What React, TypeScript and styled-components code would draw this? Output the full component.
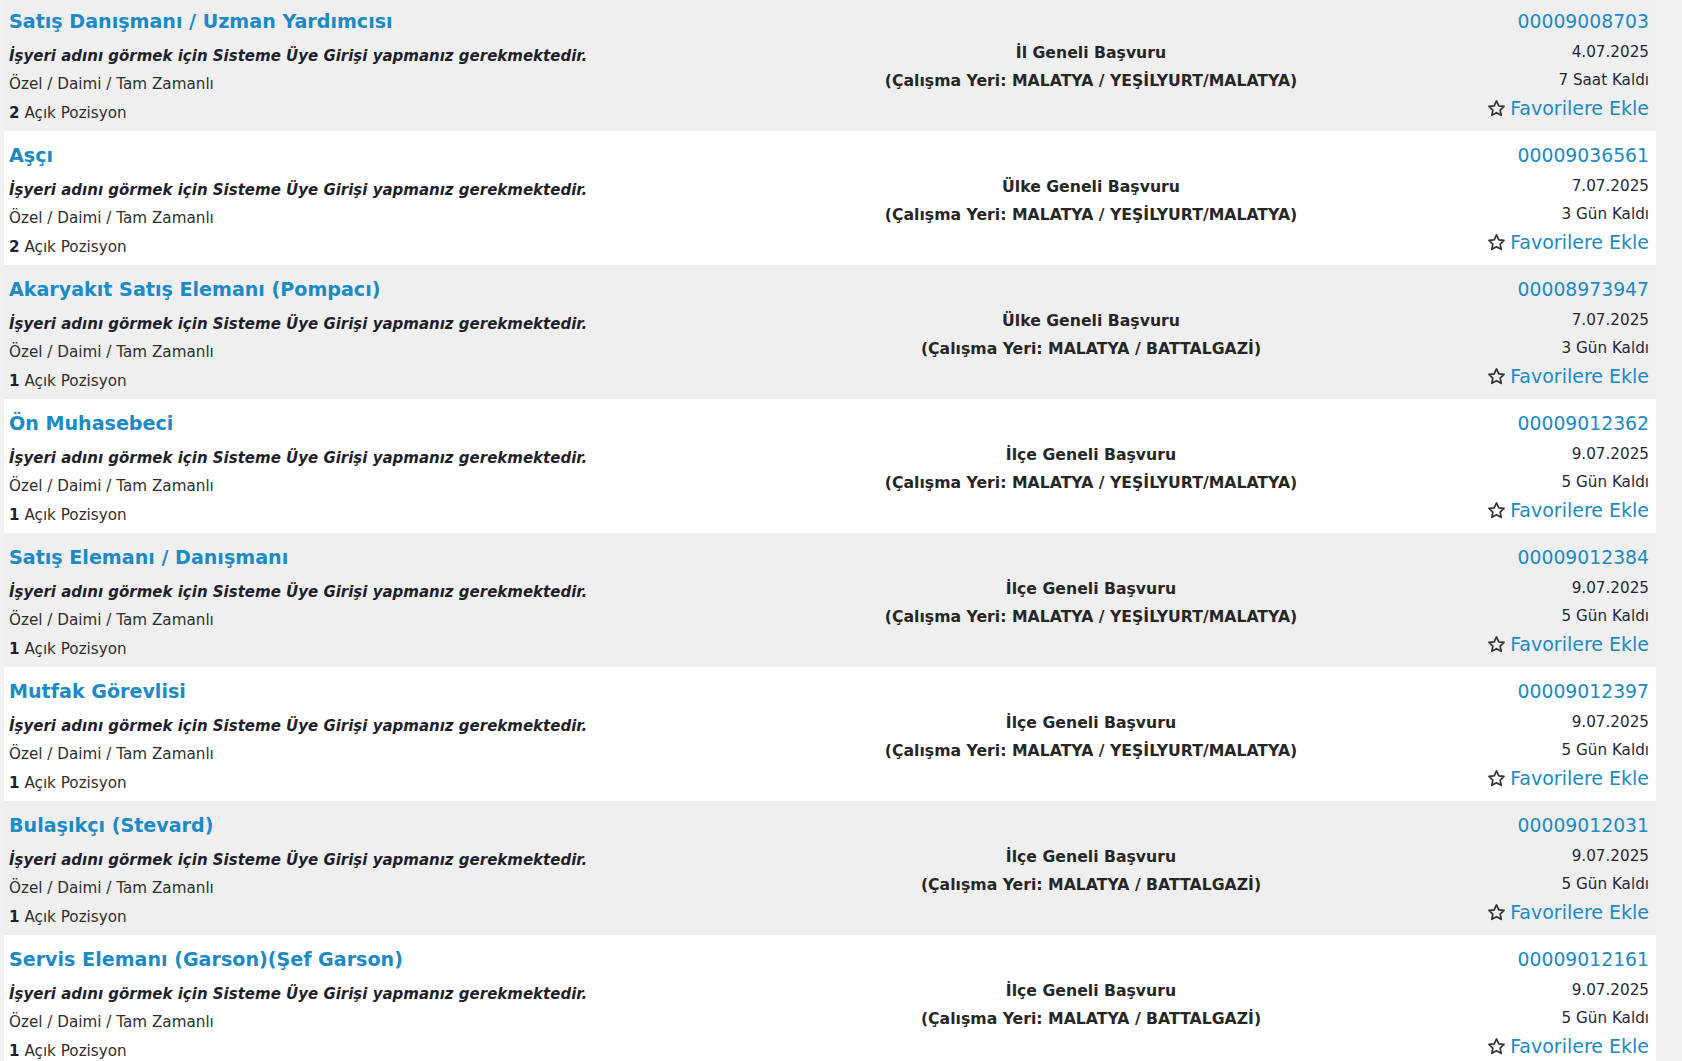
import React from "react";
import styled, { createGlobalStyle } from "styled-components";

const Global = createGlobalStyle`
  html, body { margin: 0; padding: 0; }
  body {
    background: #f1f1f1;
    font-family: "DejaVu Sans", Verdana, sans-serif;
    overflow: hidden;
  }
`;

const Page = styled.div`
  padding: 0 26px 0 4px;
`;

const List = styled.div`
  margin-top: -3px;
  display: flex;
  flex-direction: column;
`;

const Row = styled.div<{ $alt: boolean }>`
  display: grid;
  grid-template-columns: 695px 774px 1fr;
  height: 134px;
  box-sizing: border-box;
  padding: 10px 7px 5px 5px;
  background: ${(p) => (p.$alt ? "#efefef" : "#ffffff")};
`;

const Left = styled.div`
  display: flex;
  flex-direction: column;
  align-items: flex-start;
`;

const Title = styled.a`
  font-size: 19.1px;
  font-weight: bold;
  line-height: 29px;
  color: #1b8ac6;
  text-decoration: none;
  white-space: nowrap;
`;

const Notice = styled.div`
  margin-top: 6px;
  font-size: 15px;
  font-weight: bold;
  font-style: oblique;
  line-height: 28px;
  color: #1f1f2b;
  white-space: nowrap;
`;

const Meta = styled.div<{ $lh: number }>`
  font-size: 15.2px;
  line-height: ${(p) => p.$lh}px;
  color: #2e2e2e;
  white-space: nowrap;
  b { font-weight: bold; color: #1f1f2b; }
`;

const Middle = styled.div`
  align-self: center;
  display: flex;
  flex-direction: column;
  align-items: center;
  margin-top: -1px;
  font-size: 15.7px;
  font-weight: bold;
  line-height: 28px;
  color: #262626;
  white-space: nowrap;
`;

const Right = styled.div`
  display: flex;
  flex-direction: column;
  align-items: flex-end;
  white-space: nowrap;
`;

const Code = styled.a`
  font-size: 18.8px;
  line-height: 29px;
  color: #1b8ac6;
  text-decoration: none;
`;

const Small = styled.div<{ $lh: number; $top?: number }>`
  margin-top: ${(p) => p.$top ?? 0}px;
  font-size: 15.2px;
  line-height: ${(p) => p.$lh}px;
  color: #26263a;
`;

const Fav = styled.a`
  display: flex;
  align-items: center;
  gap: 4px;
  font-size: 19px;
  line-height: 29px;
  color: #1b8ac6;
  text-decoration: none;
  svg { display: block; }
`;

const StarIcon = () => (
  <svg width="19" height="19" viewBox="0 0 24 24" fill="none" stroke="#333" strokeWidth="2.2" strokeLinejoin="round">
    <path d="M12 2.5l2.9 6.1 6.6.8-4.9 4.6 1.3 6.6L12 17.3l-5.9 3.3 1.3-6.6-4.9-4.6 6.6-.8z" />
  </svg>
);

type Job = {
  title: string;
  count: number;
  scope: string;
  place: string;
  code: string;
  date: string;
  left: string;
};

const jobs: Job[] = [
  { title: "Satış Danışmanı / Uzman Yardımcısı", count: 2, scope: "İl Geneli Başvuru", place: "MALATYA / YEŞİLYURT/MALATYA", code: "00009008703", date: "4.07.2025", left: "7 Saat Kaldı" },
  { title: "Aşçı", count: 2, scope: "Ülke Geneli Başvuru", place: "MALATYA / YEŞİLYURT/MALATYA", code: "00009036561", date: "7.07.2025", left: "3 Gün Kaldı" },
  { title: "Akaryakıt Satış Elemanı (Pompacı)", count: 1, scope: "Ülke Geneli Başvuru", place: "MALATYA / BATTALGAZİ", code: "00008973947", date: "7.07.2025", left: "3 Gün Kaldı" },
  { title: "Ön Muhasebeci", count: 1, scope: "İlçe Geneli Başvuru", place: "MALATYA / YEŞİLYURT/MALATYA", code: "00009012362", date: "9.07.2025", left: "5 Gün Kaldı" },
  { title: "Satış Elemanı / Danışmanı", count: 1, scope: "İlçe Geneli Başvuru", place: "MALATYA / YEŞİLYURT/MALATYA", code: "00009012384", date: "9.07.2025", left: "5 Gün Kaldı" },
  { title: "Mutfak Görevlisi", count: 1, scope: "İlçe Geneli Başvuru", place: "MALATYA / YEŞİLYURT/MALATYA", code: "00009012397", date: "9.07.2025", left: "5 Gün Kaldı" },
  { title: "Bulaşıkçı (Stevard)", count: 1, scope: "İlçe Geneli Başvuru", place: "MALATYA / BATTALGAZİ", code: "00009012031", date: "9.07.2025", left: "5 Gün Kaldı" },
  { title: "Servis Elemanı (Garson)(Şef Garson)", count: 1, scope: "İlçe Geneli Başvuru", place: "MALATYA / BATTALGAZİ", code: "00009012161", date: "9.07.2025", left: "5 Gün Kaldı" },
];

export default function App() {
  return (
    <Page>
      <Global />
      <List>
        {jobs.map((j, i) => (
          <Row key={j.code} $alt={i % 2 === 0}>
            <Left>
              <Title href="#">{j.title}</Title>
              <Notice>İşyeri adını görmek için Sisteme Üye Girişi yapmanız gerekmektedir.</Notice>
              <Meta $lh={29}>Özel / Daimi / Tam Zamanlı</Meta>
              <Meta $lh={28}>
                <b>{j.count}</b> Açık Pozisyon
              </Meta>
            </Left>
            <Middle>
              <div>{j.scope}</div>
              <div>(Çalışma Yeri: {j.place})</div>
            </Middle>
            <Right>
              <Code href="#">{j.code}</Code>
              <Small $lh={28} $top={2}>{j.date}</Small>
              <Small $lh={28}>{j.left}</Small>
              <Fav href="#">
                <StarIcon />
                Favorilere Ekle
              </Fav>
            </Right>
          </Row>
        ))}
      </List>
    </Page>
  );
}
